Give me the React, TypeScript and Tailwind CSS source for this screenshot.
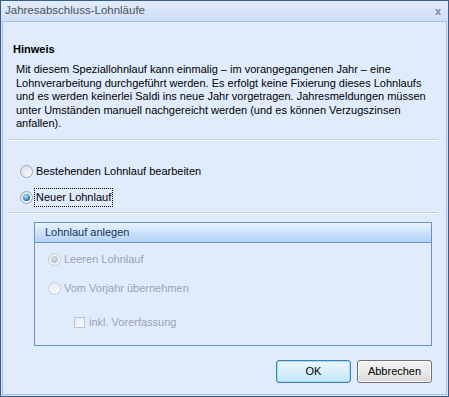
import React from 'react';

const font = { fontFamily: '"Liberation Sans", Arial, sans-serif' };

function Radio({ checked, disabled }: { checked?: boolean; disabled?: boolean }) {
  return (
    <span
      className={`relative inline-flex w-[13px] h-[13px] rounded-full border items-center justify-center shrink-0 ${
        disabled ? 'border-[#c4ccd6] bg-gradient-to-br from-[#e8ecf0] to-[#f8f9fa]' : 'border-[#9aa7b8] bg-gradient-to-br from-[#d9dde3] to-[#fbfbfc]'
      }`}
    >
      {checked && (
        <span
          className={`w-[7px] h-[7px] rounded-full ${
            disabled ? 'bg-[radial-gradient(circle_at_40%_35%,#d8dee6,#a9b3c0)]' : 'bg-[radial-gradient(circle_at_40%_35%,#b9e4ff,#1a6fb5_70%,#0d4f8e)]'
          }`}
        />
      )}
    </span>
  );
}

export default function App() {
  return (
    <div className="w-[449px] h-[397px] bg-[#dbe7f6] border border-[#3a5c8a] flex flex-col text-[11px] text-black" style={font}>
      {/* Title bar */}
      <div className="h-[20px] flex items-center justify-between pl-[4px] pr-[7px] bg-gradient-to-b from-[#e4eefb] via-[#d6e4f6] to-[#cfdff4] shrink-0">
        <span className="text-[11.5px] text-[#4c5560]">Jahresabschluss-Lohnläufe</span>
        <span className="text-[11px] font-bold text-[#7d8a9c] leading-none">x</span>
      </div>

      {/* Client */}
      <div className="flex-1 mx-[1px] mb-[1px] border border-[#a4c3ec] bg-[#e0ecfd] flex flex-col">
        <div className="pl-[10px] pt-[20px] font-bold leading-[14px]">Hinweis</div>
        <div className="pl-[13px] pt-[7px] leading-[13.5px]">
          <div>Mit diesem Speziallohnlauf kann einmalig – im vorangegangenen Jahr – eine</div>
          <div>Lohnverarbeitung durchgeführt werden. Es erfolgt keine Fixierung dieses Lohnlaufs</div>
          <div>und es werden keinerlei Saldi ins neue Jahr vorgetragen. Jahresmeldungen müssen</div>
          <div>unter Umständen manuell nachgereicht werden (und es können Verzugszinsen</div>
          <div>anfallen).</div>
        </div>

        <div className="mt-[8px] ml-[6px] mr-[8px] border-t border-[#c3d1e4] border-b border-b-white" />

        <div className="pl-[17px] pt-[24px] flex flex-col gap-[12px]">
          <label className="flex items-center gap-[3px] h-[14px]">
            <Radio />
            <span>Bestehenden Lohnlauf bearbeiten</span>
          </label>
          <label className="flex items-center gap-[2px] h-[14px]">
            <Radio checked />
            <span className="outline outline-1 outline-dotted outline-black px-[1px]">Neuer Lohnlauf</span>
          </label>
        </div>

        <div className="mt-[7px] ml-[6px] mr-[8px] border-t border-[#c3d1e4] border-b border-b-white" />

        {/* Group */}
        <div className="ml-[31px] mr-[14px] mt-[8px] h-[124px] border border-[#6b93c9] flex flex-col">
          <div className="h-[20px] flex items-center pl-[10px] bg-gradient-to-b from-[#e9f2fd] to-[#b4d2f8] border-b border-[#6b93c9] text-[#15325e] text-[11px]">
            Lohnlauf anlegen
          </div>
          <div className="pl-[13px] pt-[10px] flex flex-col text-[#9ba3ad]">
            <label className="flex items-center gap-[3px] h-[14px]">
              <Radio checked disabled />
              <span>Leeren Lohnlauf</span>
            </label>
            <label className="flex items-center gap-[3px] h-[14px] mt-[15px]">
              <Radio disabled />
              <span>Vom Vorjahr übernehmen</span>
            </label>
            <label className="flex items-center gap-[4px] h-[14px] mt-[20px] pl-[26px]">
              <span className="w-[11px] h-[11px] border border-[#b9c3cf] bg-gradient-to-br from-[#e6eaee] to-[#f9fafb]" />
              <span>inkl. Vorerfassung</span>
            </label>
          </div>
        </div>

        {/* Buttons */}
        <div className="flex justify-end gap-[6px] mr-[14px] mt-[14px]">
          <button className="w-[75px] h-[23px] rounded-[3px] border border-[#3c7fb1] bg-gradient-to-b from-[#eaf6fd] via-[#d9f0fc] to-[#bee6fd] shadow-[inset_0_0_0_1px_#a9dbf6] text-[11px]">
            OK
          </button>
          <button className="w-[75px] h-[23px] rounded-[3px] border border-[#707070] bg-gradient-to-b from-[#f2f2f2] via-[#ebebeb] to-[#d6d6d6] shadow-[inset_0_0_0_1px_#fcfcfc] text-[11px]">
            Abbrechen
          </button>
        </div>
      </div>
    </div>
  );
}
